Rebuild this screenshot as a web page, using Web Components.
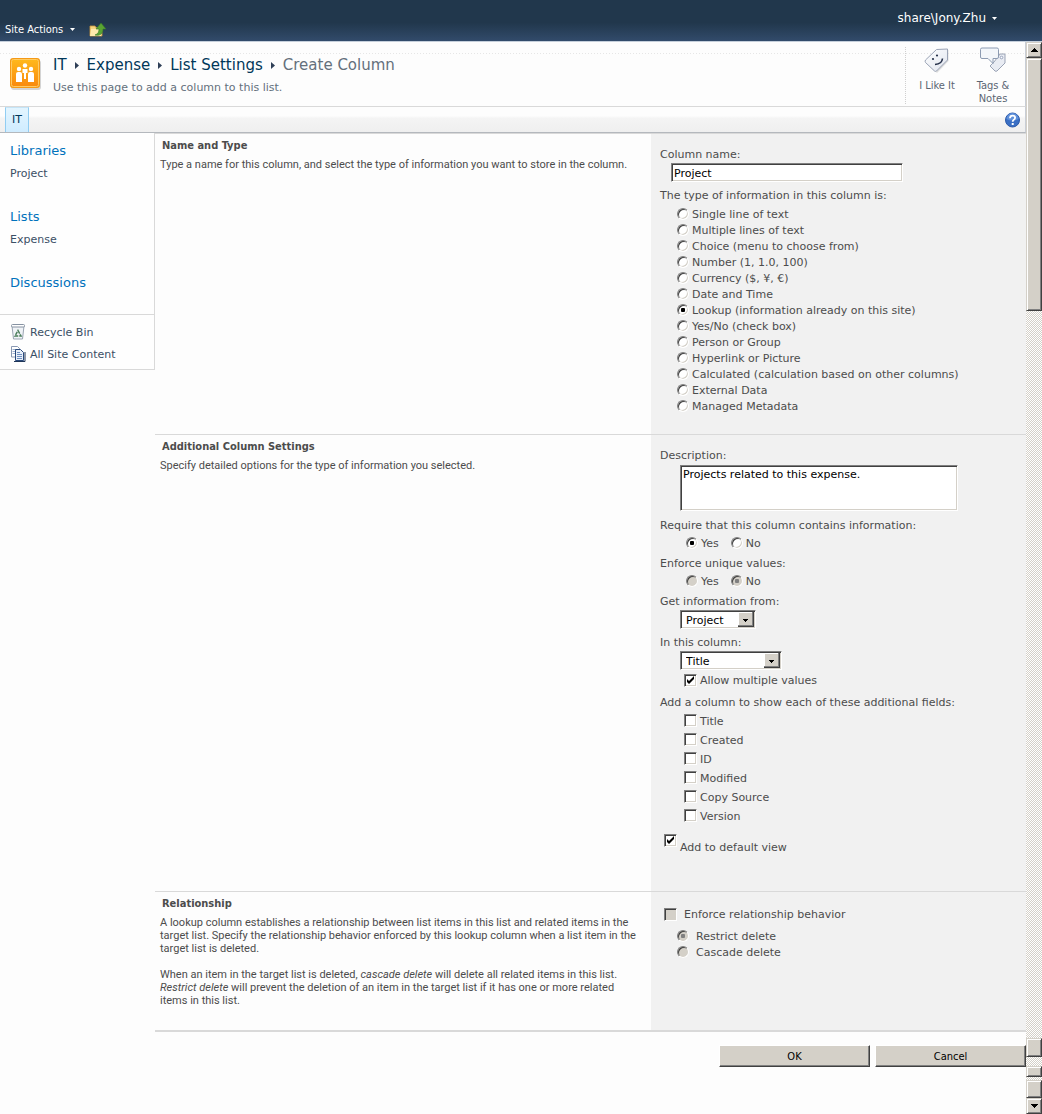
<!DOCTYPE html>
<html lang="en">
<head>
<meta charset="utf-8">
<title>Create Column</title>
<style>
  html, body { margin: 0; }
  body {
    --narrow: "DejaVu Sans Condensed", "Open Sans", sans-serif;
    --prose: Roboto, "Liberation Sans", sans-serif;
    --line: #d9d9d9;
    --ink: #4c4c4c;
    --face: #d4d0c8;
    font: 11px/16px "DejaVu Sans", sans-serif;
    color: var(--ink);
    background: #fdfdfd;
  }
</style>
</head>
<body>
<sp-app>
  <sp-topbar slot="top" user="share\Jony.Zhu"></sp-topbar>
  <sp-title slot="page"></sp-title>
  <sp-tabs slot="page"></sp-tabs>
  <sp-sidenav slot="nav"></sp-sidenav>

  <sp-section slot="main" heading="Name and Type">
    Type a name for this column, and select the type of information you want to store in the column.
    <sp-type-form slot="form"></sp-type-form>
  </sp-section>
  <sp-section slot="main" heading="Additional Column Settings">
    Specify detailed options for the type of information you selected.
    <sp-settings-form slot="form"></sp-settings-form>
  </sp-section>
  <sp-section slot="main" heading="Relationship" last>
    A lookup column establishes a relationship between list items in this list and related items in the<br>target list. Specify the relationship behavior enforced by this lookup column when a list item in the<br>target list is deleted.<br><br>When an item in the target list is deleted, <i>cascade delete</i> will delete all related items in this list.<br><i>Restrict delete</i> will prevent the deletion of an item in the target list if it has one or more related<br>items in this list.
    <sp-relation-form slot="form"></sp-relation-form>
  </sp-section>
  <sp-actions slot="main"></sp-actions>
</sp-app>

<script>
const define = (name, html) => customElements.define(name, class extends HTMLElement {
  constructor() {
    super();
    this.attachShadow({ mode: 'open' }).innerHTML =
      typeof html === 'function' ? html(this) : html;
  }
});

/* Shared look of the raised and sunken form controls */
const arrow = "url(\"data:image/svg+xml,%3Csvg xmlns='http://www.w3.org/2000/svg' width='16' height='15' shape-rendering='crispEdges'%3E%3Crect width='16' height='15' fill='%23404040'/%3E%3Crect width='15' height='14' fill='%23808080'/%3E%3Crect width='14' height='13' fill='%23fff'/%3E%3Crect x='1' y='1' width='13' height='12' fill='%23d4d0c8'/%3E%3Cpath d='M5 7h5v1h-1v1h-1v1h-1v-1h-1v-1h-1z'/%3E%3C/svg%3E\")";
const tick = "url(\"data:image/svg+xml,%3Csvg xmlns='http://www.w3.org/2000/svg' width='11' height='11'%3E%3Cpath d='M2 4v3l2 2 5-5V1L4 6z'/%3E%3C/svg%3E\")";
const controls = `
  :host { display: block; }
  * { box-sizing: border-box; }
  label, .lbl { display: block; white-space: nowrap; }
  input, textarea, select, button { font: inherit; color: #000; margin: 0; border-radius: 0; appearance: none; outline: 0; }
  input, textarea, select {
    background-color: #fff; border: 1px solid; border-color: #808080 #fff #fff #808080;
    box-shadow: inset 1px 1px #404040, inset -1px -1px var(--face);
  }
  .box { display: block; margin-left: 20px; }
  textarea { resize: none; overflow: hidden; padding: 2px 2px 0; }
  select { height: 19px; padding: 1px 18px 0 5px; line-height: 15px;
    background: #fff ${arrow} no-repeat right 1px center; }
  input[type=radio], input[type=checkbox] { flex: none; padding: 0; }
  input[type=radio] { width: 12px; height: 12px; border-radius: 50%; }
  input[type=radio]:checked { background-image: radial-gradient(circle, #000 2px, transparent 2.5px); }
  input[type=radio]:checked:disabled { background-image: radial-gradient(circle, #808080 2px, transparent 2.5px); }
  input[type=checkbox] { width: 13px; height: 13px; }
  input[type=checkbox]:checked { background-image: ${tick}; }
  input:disabled { background-color: var(--face); }
  .opt { display: flex; align-items: center; gap: 3px; height: 16px; }
  .opt span { padding-top: 2px; }
  .radios { padding-left: 17px; }
  .pair { display: flex; gap: 12px; padding-left: 26px; margin: 1px 0 5px; }
`;
const opt = (type, name, text, state = '') =>
  `<label class="opt"><input type="${type}" name="${name}" ${state}><span>${text}</span></label>`;

define('sp-app', `
  <style>
    :host { display: flex; flex-direction: column; min-height: 100vh; }
    .body { display: flex; flex: 1; }
    .page { flex: 1; min-width: 0; }
    .cols { display: flex; align-items: flex-start; }
    .main { flex: 1; min-width: 0; border-top: 1px solid var(--line); }
  </style>
  <slot name="top"></slot>
  <div class="body">
    <div class="page">
      <slot name="page"></slot>
      <div class="cols"><slot name="nav"></slot><div class="main"><slot name="main"></slot></div></div>
    </div>
    <sp-scrollbar></sp-scrollbar>
  </div>`);

define('sp-topbar', el => `
  <style>
    :host { display: flex; justify-content: space-between; box-sizing: border-box; height: 42px; color: #fff;
      background: linear-gradient(#21374c 55%, #2c4460 85%, #324b6b); border-bottom: 1px solid #c5cfdb; }
    button { font: inherit; color: inherit; background: none; border: 0; padding: 0; display: flex; align-items: center; gap: 6px; }
    .left { display: flex; align-items: center; gap: 13px; padding: 18px 0 0 5px; font-family: var(--narrow); }
    .left svg { margin-left: 1px; }
    .user { display: flex; align-items: flex-start; padding: 10px 45px 0 0; font-size: 12px; }
    svg { display: block; }
  </style>
  <div class="left">
    <button>Site Actions <svg width="5" height="3"><path d="M0 0h5L2.5 3z" fill="#fff"/></svg></button>
    <svg width="17" height="16" viewBox="0 0 17 16">
      <path d="M1 4h5l1 1.500h6V14H1z" fill="#f5d57f" stroke="#c9953a" stroke-width=".8"/>
      <path d="M2 7h11l-1 7H1z" fill="#fde9ad"/>
      <path d="M6 13c3-1 4-3 4-6H7l5-6 5 6h-3c0 5-3 7-8 6z" fill="#59a332" stroke="#34752a" stroke-width=".6"/>
    </svg>
  </div>
  <div class="user"><button>${el.getAttribute('user')} <svg width="5" height="3"><path d="M0 0h5L2.5 3z" fill="#fff"/></svg></button></div>`);

define('sp-title', `
  <style>
    :host { display: flex; box-sizing: border-box; height: 65px; border-bottom: 1px solid var(--line); background:
      repeating-linear-gradient(90deg, #e6e6e6 0 1px, transparent 1px 3px) 0 11px / 100% 1px no-repeat; border-right: 1px solid #c9ced6; }
    .logo { flex: none; margin: 15px 0 0 9px; }
    .text { flex: 1; padding: 13px 0 0 11px; color: #64707c; }
    nav { display: flex; align-items: center; gap: 8px; font-size: 15px; line-height: 20px; white-space: nowrap; }
    a { color: #003759; text-decoration: none; }
    .sub { line-height: 16px; padding-top: 5px; }
    .social { display: flex; align-items: flex-start; margin: 5px 0 2px; border-left: 1px dotted #cfcfcf; padding: 0 4px 0 3px; }
    button { width: 56px; padding: 0; border: 0; background: none; color: #5b6573; font: 11px/13px var(--narrow); display: flex; flex-direction: column; align-items: center; gap: 5px; }
  </style>
  <svg class="logo" width="33" height="34" viewBox="0 0 33 34">
    <defs><linearGradient id="g" x2="0" y2="1"><stop stop-color="#ffb81c"/><stop offset="1" stop-color="#f98a0d"/></linearGradient></defs>
    <rect x="2" y="3" width="30" height="30" rx="3" fill="#d4d4d4"/>
    <rect x="1" y="1" width="30" height="30" rx="3" fill="#f59a16"/>
    <rect x="2.500" y="2.500" width="27" height="27" rx="2" fill="url(#g)" stroke="#ffcb63"/>
    <g fill="#fff"><circle cx="10" cy="12" r="2.200"/><circle cx="16" cy="8.500" r="2.200"/><circle cx="22" cy="12" r="2.200"/>
    <path d="M7 17q0-2 2-2h2q2 0 2 2v8H7zM19 17q0-2 2-2h2q2 0 2 2v8h-6zM13.500 12h5v4H17v6h-2v-6h-1.500z"/></g>
  </svg>
  <div class="text">
    <nav aria-label="Breadcrumb"><a href="#">IT</a><svg width="4" height="7"><path d="M0 0l4 3.500L0 7z" fill="#2f3f57"/></svg><a href="#">Expense</a><svg width="4" height="7"><path d="M0 0l4 3.500L0 7z" fill="#2f3f57"/></svg><a href="#">List Settings</a><svg width="4" height="7"><path d="M0 0l4 3.500L0 7z" fill="#2f3f57"/></svg><span>Create Column</span></nav>
    <div class="sub">Use this page to add a column to this list.</div>
  </div>
  <div class="social">
    <button><svg width="26" height="27" viewBox="0 0 26 27">
      <defs><linearGradient id="t" x2="1" y2="1"><stop stop-color="#fff"/><stop offset="1" stop-color="#dfe4ee"/></linearGradient></defs>
      <path d="M4 17L15 4l9.500-1v11L13 26z" fill="#ddd"/>
      <path d="M1.500 13L12.500 2.500l11-.5v11L12.500 24q-1 .8-2 0l-9-8.500q-.8-1.200 0-2.500z" fill="url(#t)" stroke="#9aa3b5"/>
      <circle cx="9" cy="12" r="1.100" fill="#27324b"/><circle cx="13" cy="8.500" r="1.100" fill="#27324b"/>
      <path d="M11 17.500q7-.5 7.500-6" fill="none" stroke="#27324b" stroke-width="1.600"/></svg>I Like It</button>
    <button><svg width="26" height="27" viewBox="0 0 26 27">
      <path d="M14 15l6-8h5v9l-8 8q-1 .6-2 0l-5-5z" fill="#e9ecf3" stroke="#9aa3b5"/><circle cx="21.500" cy="10.500" r="1.300" fill="#fff" stroke="#8391ad" stroke-width=".8"/>
      <path d="M2 1h15q1.500 0 1.500 1.500V10q0 1.500-1.500 1.500h-4v5l-5-5H2Q.5 11.500.5 10V2.500Q.5 1 2 1z" fill="#f3f6fa" stroke="#8d9bb2"/></svg>Tags &amp;<br>Notes</button>
  </div>`);

define('sp-tabs', `
  <style>
    :host { display: flex; justify-content: space-between; align-items: center; box-sizing: border-box; height: 26px; padding: 0 5px;
      border-bottom: 1px solid #b4b8bd; border-right: 1px solid #c9ced6; background: linear-gradient(#fdfdfd 35%, #f4f4f4 45%, #efefef); }
    a { box-sizing: border-box; height: 25px; padding: 0 6px; line-height: 24px; border: 1px solid #91cdf2; border-top-color: #c5e4f6; border-bottom: 0;
      background: linear-gradient(#e3f5ff, #cfecff); color: #003759; text-decoration: none; }
    svg { display: block; }
    button { border: 0; padding: 0; background: none; }
  </style>
  <a href="#">IT</a>
  <button aria-label="Help"><svg width="15" height="16" viewBox="0 0 15 16"><circle cx="7.500" cy="8" r="7" fill="#3a6fc4" stroke="#2c59a8"/><path d="M1.500 7a6 6 0 0 1 12 0q-6 3-12 0z" fill="#5f90da"/>
    <path d="M5 6.200q0-2.500 2.600-2.500 2.500 0 2.500 2 0 1.300-1.300 2-1.100.7-1.100 2" fill="none" stroke="#fff" stroke-width="1.800"/><rect x="6.700" y="11" width="2" height="2" fill="#fff"/></svg></button>`);

define('sp-sidenav', `
  <style>
    :host { display: block; box-sizing: border-box; width: 155px; border-right: 1px solid var(--line); border-bottom: 1px solid var(--line); line-height: 20px; background: #fefefe; }
    a { color: #3b4f65; text-decoration: none; }
    .groups { display: flex; flex-direction: column; gap: 23px; padding: 8px 10px 21px; border-bottom: 1px solid var(--line); }
    .g { display: flex; flex-direction: column; gap: 3px; }
    .h { color: #0072bc; font-size: 13px; }
    .tools { padding: 6px 10px 4px; }
    .tools a { display: flex; align-items: center; gap: 4px; height: 22px; }
    .tools span { padding-top: 2px; }
  </style>
  <nav class="groups">
    <div class="g"><a class="h" href="#">Libraries</a><a href="#">Project</a></div>
    <div class="g"><a class="h" href="#">Lists</a><a href="#">Expense</a></div>
    <div class="g"><a class="h" href="#">Discussions</a></div>
  </nav>
  <nav class="tools">
    <a href="#"><svg width="16" height="16" viewBox="0 0 16 16"><path d="M2 2l1.500 13h9L14 2z" fill="#f0f3f7" stroke="#9aa5b3"/><rect x="1.500" y=".5" width="13" height="2.500" rx="1" fill="#fff" stroke="#8692a2"/><path d="M8 6.500l3 5.500H5z" fill="none" stroke="#4a7d5a" stroke-width="1.500" stroke-dasharray="3.500 1"/></svg><span>Recycle Bin</span></a>
    <a href="#"><svg width="16" height="16" viewBox="0 0 16 16"><path d="M1.500.5h6l2 2V11h-8z" fill="#fff" stroke="#8a99b3"/><path d="M2.500 3.500h4M2.500 5.500h4M2.500 7.500h4" stroke="#9db0cf"/><path d="M5.500 3.500h5l3 3v8h-8z" fill="#e8eff9" stroke="#2a4a7c"/><path d="M7 6.500h3M7 8.500h5M7 10.500h5M7 12.500h5" stroke="#6f8fc0"/><path d="M4 15.500h11V6" fill="none" stroke="#1f3557"/></svg><span>All Site Content</span></a>
  </nav>`);

define('sp-section', el => `
  <style>
    :host { display: grid; grid-template-columns: minmax(0, 1fr) 375px; border-bottom: ${el.hasAttribute('last') ? 2 : 1}px solid var(--line); }
    .info { padding: 5px 5px 0; font-family: var(--prose); line-height: 13px; white-space: nowrap; }
    h2 { margin: 0 0 6px 2px; font: bold 11px/13px var(--narrow); }
    .form { background: #f1f1f1; padding: 13px 9px 20px; }
  </style>
  <div class="info"><h2>${el.getAttribute('heading')}</h2><slot></slot></div>
  <div class="form"><slot name="form"></slot></div>`);

const types = ['Single line of text', 'Multiple lines of text', 'Choice (menu to choose from)', 'Number (1, 1.0, 100)',
  'Currency ($, ¥, €)', 'Date and Time', 'Lookup (information already on this site)', 'Yes/No (check box)', 'Person or Group',
  'Hyperlink or Picture', 'Calculated (calculation based on other columns)', 'External Data', 'Managed Metadata'];
define('sp-type-form', `
  <style>${controls}
    #name { display: block; width: 232px; height: 19px; margin: 0 0 6px 11px; padding: 1px 2px 0; }
    .radios { padding-top: 2px; }
  </style>
  <label for="name">Column name:</label>
  <input id="name" type="text" value="Project">
  <div class="lbl" id="kind">The type of information in this column is:</div>
  <div class="radios" role="radiogroup" aria-labelledby="kind">
    ${types.map((t, i) => opt('radio', 'type', t, i === 6 ? 'checked' : '')).join('')}
  </div>`);

define('sp-settings-form', `
  <style>${controls}
    #desc { width: 278px; height: 46px; margin-top: 1px; margin-bottom: 7px; line-height: 14px; }
    #from { width: 76px; margin-top: 0; margin-bottom: 6px; }
    #col { width: 102px; margin-top: 0; margin-bottom: 2px; }
    .checks { padding-left: 24px; }
    .fields .opt { height: 19px; }
    .multi { margin-bottom: 7px; }
    .view { align-items: flex-start; height: auto; padding: 9px 0 15px 4px; }
    .view span { padding-top: 6px; }
  </style>
  <label for="desc">Description:</label>
  <textarea id="desc" class="box">Projects related to this expense.</textarea>
  <div class="lbl">Require that this column contains information:</div>
  <div class="pair">${opt('radio', 'req', 'Yes', 'checked')}${opt('radio', 'req', 'No')}</div>
  <div class="lbl">Enforce unique values:</div>
  <div class="pair">${opt('radio', 'uniq', 'Yes', 'disabled')}${opt('radio', 'uniq', 'No', 'checked disabled')}</div>
  <label for="from">Get information from:</label>
  <select id="from" class="box"><option>Project</option></select>
  <label for="col">In this column:</label>
  <select id="col" class="box"><option>Title</option></select>
  <div class="checks multi">${opt('checkbox', 'multi', 'Allow multiple values', 'checked')}</div>
  <div class="lbl">Add a column to show each of these additional fields:</div>
  <div class="checks fields">${['Title', 'Created', 'ID', 'Modified', 'Copy Source', 'Version'].map(t => opt('checkbox', 'field', t)).join('')}</div>
  <label class="opt view"><input type="checkbox" checked><span>Add to default view</span></label>`);

define('sp-relation-form', `
  <style>${controls}
    :host { padding: 1px 0 50px; }
    .opt { gap: 7px; }
    .enforce { height: 16px; padding-left: 4px; margin-bottom: 6px; }
  </style>
  <label class="opt enforce"><input type="checkbox" disabled><span>Enforce relationship behavior</span></label>
  <div class="radios">${opt('radio', 'del', 'Restrict delete', 'checked disabled')}${opt('radio', 'del', 'Cascade delete', 'disabled')}</div>`);

define('sp-actions', `
  <style>
    :host { display: flex; justify-content: flex-end; gap: 5px; padding: 13px 0 20px; }
    button { width: 151px; height: 22px; padding: 1px 0 0; font: 11px/16px var(--narrow); color: #000; background: var(--face);
      border: 1px solid; border-color: #fff #404040 #404040 #fff; box-shadow: inset -1px -1px #808080; }
  </style>
  <button>OK</button><button>Cancel</button>`);

define('sp-scrollbar', `
  <style>
    :host { display: flex; flex-direction: column; width: 16px; flex: none;
      background: repeating-conic-gradient(var(--face) 0 25%, #fff 0 50%) 0 0 / 2px 2px; }
    * { box-sizing: border-box; }
    button, .thumb { flex: none; padding: 0; height: 16px; width: 16px; background: var(--face); border: 1px solid; border-color: var(--face) #404040 #404040 var(--face);
      box-shadow: inset 1px 1px #fff, inset -1px -1px #808080; display: flex; align-items: center; justify-content: center; }
    .thumb { height: 253px; }
    .space { flex: 1; }
    .a { height: 19px; margin-bottom: 9px; }
    .b { height: 11px; margin-bottom: 3px; }
    .c { height: 18px; }
  </style>
  <button aria-label="Scroll up"><svg width="7" height="4" shape-rendering="crispEdges"><path d="M3 0h1v1h1v1h1v1h1v1H0V3h1V2h1V1h1z"/></svg></button>
  <div class="thumb"></div><div class="space"></div>
  <div class="thumb a"></div><div class="thumb b"></div><div class="thumb c"></div>
  <button aria-label="Scroll down"><svg width="7" height="4" shape-rendering="crispEdges"><path d="M0 0h7v1H6v1H5v1H4v1H3V3H2V2H1V1H0z"/></svg></button>`);
</script>
</body>
</html>
